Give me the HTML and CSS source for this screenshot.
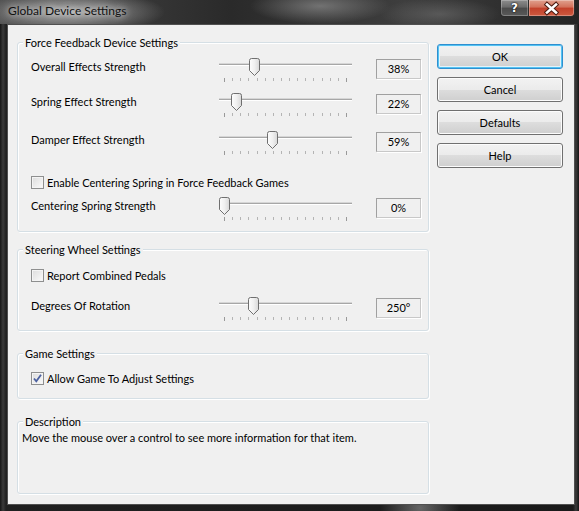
FILE: index.html
```html
<!DOCTYPE html>
<html lang="en">

<head>
  <title>Global Device Settings</title>
  <link rel="stylesheet" href="styles.css">
</head>

<body>
  <div class="window">
    <div class="titlebar">
      <span class="title">Global Device Settings</span>
      <div class="caption">
        <span class="cap cap-help">?</span>
        <span class="cap cap-close">
          <svg width="45" height="15" viewBox="0 0 45 15">
            <path d="M18 3.5 L27 11.5 M27 3.5 L18 11.5" stroke="#4a1a10" stroke-width="4.5" stroke-linecap="square" />
            <path d="M18 3.5 L27 11.5 M27 3.5 L18 11.5" stroke="#fff" stroke-width="2.6" stroke-linecap="square" />
          </svg>
        </span>
      </div>
    </div>

    <div class="client">
      <div class="groups">
        <fieldset class="group group-ff">
          <legend>Force Feedback Device Settings</legend>

          <div class="row row-1">
            <span class="label">Overall Effects Strength</span>
            <div class="slider">
              <div class="track"></div>
              <svg class="thumb" style="left: 30px" width="11" height="18" viewBox="0 0 11 18"><path d="M0.5 2.5 Q0.5 0.5 2.5 0.5 H8.5 Q10.5 0.5 10.5 2.5 V12.5 L5.5 17.5 L0.5 12.5 Z" fill="url(#thumbfill)" stroke="#6f6f6f" /></svg>
              <div class="ticks"><i class="end"></i><i></i><i></i><i></i><i></i><i></i><i></i><i></i><i></i><i></i><i></i><i></i><i></i><i></i><i></i><i class="end"></i></div>
            </div>
            <span class="value">38%</span>
          </div>

          <div class="row row-2">
            <span class="label">Spring Effect Strength</span>
            <div class="slider">
              <div class="track"></div>
              <svg class="thumb" style="left: 12px" width="11" height="18" viewBox="0 0 11 18"><path d="M0.5 2.5 Q0.5 0.5 2.5 0.5 H8.5 Q10.5 0.5 10.5 2.5 V12.5 L5.5 17.5 L0.5 12.5 Z" fill="url(#thumbfill)" stroke="#6f6f6f" /></svg>
              <div class="ticks"><i class="end"></i><i></i><i></i><i></i><i></i><i></i><i></i><i></i><i></i><i></i><i></i><i></i><i></i><i></i><i></i><i class="end"></i></div>
            </div>
            <span class="value">22%</span>
          </div>

          <div class="row row-3">
            <span class="label">Damper Effect Strength</span>
            <div class="slider">
              <div class="track"></div>
              <svg class="thumb" style="left: 48px" width="11" height="18" viewBox="0 0 11 18"><path d="M0.5 2.5 Q0.5 0.5 2.5 0.5 H8.5 Q10.5 0.5 10.5 2.5 V12.5 L5.5 17.5 L0.5 12.5 Z" fill="url(#thumbfill)" stroke="#6f6f6f" /></svg>
              <div class="ticks"><i class="end"></i><i></i><i></i><i></i><i></i><i></i><i></i><i></i><i></i><i></i><i></i><i></i><i></i><i></i><i></i><i class="end"></i></div>
            </div>
            <span class="value">59%</span>
          </div>

          <label class="check-row check-centering">
            <span class="checkbox"></span>
            <span>Enable Centering Spring in Force Feedback Games</span>
          </label>

          <div class="row row-4">
            <span class="label">Centering Spring Strength</span>
            <div class="slider">
              <div class="track"></div>
              <svg class="thumb" style="left: 0px" width="11" height="18" viewBox="0 0 11 18"><path d="M0.5 2.5 Q0.5 0.5 2.5 0.5 H8.5 Q10.5 0.5 10.5 2.5 V12.5 L5.5 17.5 L0.5 12.5 Z" fill="url(#thumbfill)" stroke="#6f6f6f" /></svg>
              <div class="ticks"><i class="end"></i><i></i><i></i><i></i><i></i><i></i><i></i><i></i><i></i><i></i><i></i><i></i><i></i><i></i><i></i><i class="end"></i></div>
            </div>
            <span class="value">0%</span>
          </div>
        </fieldset>

        <fieldset class="group group-wheel">
          <legend>Steering Wheel Settings</legend>

          <label class="check-row check-pedals">
            <span class="checkbox"></span>
            <span>Report Combined Pedals</span>
          </label>

          <div class="row row-5">
            <span class="label">Degrees Of Rotation</span>
            <div class="slider">
              <div class="track"></div>
              <svg class="thumb" style="left: 29px" width="11" height="18" viewBox="0 0 11 18"><path d="M0.5 2.5 Q0.5 0.5 2.5 0.5 H8.5 Q10.5 0.5 10.5 2.5 V12.5 L5.5 17.5 L0.5 12.5 Z" fill="url(#thumbfill)" stroke="#6f6f6f" /></svg>
              <div class="ticks"><i class="end"></i><i></i><i></i><i></i><i></i><i></i><i></i><i></i><i></i><i></i><i></i><i></i><i></i><i></i><i></i><i class="end"></i></div>
            </div>
            <span class="value">250°</span>
          </div>
        </fieldset>

        <fieldset class="group group-game">
          <legend>Game Settings</legend>

          <label class="check-row check-game">
            <span class="checkbox checked">
              <svg width="11" height="11" viewBox="0 0 11 11"><path d="M2 5.5 L4.3 8.3 L9 1.8" fill="none" stroke="#4c61a0" stroke-width="1.8" /></svg>
            </span>
            <span>Allow Game To Adjust Settings</span>
          </label>
        </fieldset>

        <fieldset class="group group-desc">
          <legend>Description</legend>
          <p class="desc">Move the mouse over a control to see more information for that item.</p>
        </fieldset>
      </div>

      <div class="buttons">
        <button class="btn btn-default">OK</button>
        <button class="btn">Cancel</button>
        <button class="btn">Defaults</button>
        <button class="btn">Help</button>
      </div>
    </div>
  </div>

  <svg width="0" height="0" class="defs">
    <defs>
      <linearGradient id="thumbfill" x1="0" y1="0" x2="1" y2="0">
        <stop offset="0" stop-color="#fdfdfd" />
        <stop offset="0.5" stop-color="#f0f0f0" />
        <stop offset="1" stop-color="#d8d8d8" />
      </linearGradient>
    </defs>
  </svg>
</body>

</html>
```

FILE: styles.css
```css
html,
body {
  margin: 0;
  padding: 0;
  overflow: hidden;
  background: #1e1e1e;
}

.defs {
  position: absolute;
}

.window {
  width: 579px;
  height: 511px;
  display: flex;
  flex-direction: column;
  font-family: Lato, "Noto Sans", sans-serif;
  font-size: 11px;
  color: #000;
  background:
    radial-gradient(ellipse 40px 30px at 420px 508px, rgba(150, 150, 150, .6), transparent),
    linear-gradient(to right, #151515, #3a3a3a 3px, #202020 6px, #1a1a1a 573px, #3a3a3a 576px, #151515);
}

/* title bar */

.titlebar {
  height: 24px;
  display: flex;
  justify-content: space-between;
  align-items: flex-start;
  padding-left: 8px;
  background:
    radial-gradient(ellipse 95px 22px at 70px 12px, rgba(190, 190, 190, .85), transparent),
    radial-gradient(ellipse 70px 18px at 320px 6px, rgba(140, 140, 140, .7), transparent),
    radial-gradient(ellipse 60px 16px at 440px 14px, rgba(120, 120, 120, .5), transparent),
    linear-gradient(to right, #4a4a4a, #2a2a2a 40%, #3e3e3e 70%, #242424);
}

.title {
  font-size: 12px;
  line-height: 22px;
  color: #111;
  text-shadow: 0 0 6px rgba(255, 255, 255, .7), 0 0 10px rgba(255, 255, 255, .5);
}

.caption {
  display: flex;
  margin-right: 4px;
}

.cap {
  height: 17px;
  box-sizing: border-box;
  border: 1px solid #2c2c2c;
  border-top: 0;
  display: flex;
  align-items: center;
  justify-content: center;
}

.cap-help {
  width: 28px;
  border-bottom-left-radius: 4px;
  border-right: 0;
  background: linear-gradient(#8d8d8d, #6a6a6a 45%, #4a4a4a 50%, #5a5a5a);
  box-shadow: inset 0 0 0 1px rgba(255, 255, 255, .25);
  color: #fff;
  font-family: "DejaVu Sans", sans-serif;
  font-weight: bold;
  font-size: 12px;
  text-shadow: 0 0 2px #000, 0 0 1px #000;
}

.cap-close {
  width: 47px;
  border-bottom-right-radius: 4px;
  background: linear-gradient(#e0a08e, #d2705a 45%, #c2402a 50%, #cd5a40);
  box-shadow: inset 0 0 0 1px rgba(255, 255, 255, .3);
}

/* client area */

.client {
  flex: 1;
  margin: 0 4px 6px 7px;
  border: 1px solid #505050;
  background: #f0f0f0;
  display: flex;
  align-items: flex-start;
}

.groups {
  margin-left: 9px;
  padding-top: 10px;
  width: 412px;
}

.group {
  margin: 0;
  padding: 0;
  border: 1px solid #d5dfe5;
  border-radius: 3px;
  box-shadow: inset 1px 1px 0 #fff, 1px 1px 0 #fff;
  min-width: 0;
}

.group legend {
  margin-left: 5px;
  padding: 0 2px;
  line-height: 15px;
  background: #f0f0f0;
}

.group-ff {
  padding-bottom: 13px;
}

.group-wheel {
  margin-top: 10px;
  padding-bottom: 12px;
}

.group-game {
  margin-top: 15px;
  padding-bottom: 12px;
}

.group-desc {
  margin-top: 15px;
  padding-bottom: 48px;
}

.desc {
  margin: 1px 0 0 4px;
  line-height: 15px;
}

/* rows with slider */

.row {
  display: flex;
  align-items: flex-start;
  height: 20px;
  margin-left: 13px;
}

.row-1 {
  margin-top: 9px;
}

.row-2 {
  margin-top: 15px;
}

.row-3 {
  margin-top: 18px;
}

.row-4 {
  margin-top: 8px;
}

.row-5 {
  margin-top: 15px;
}

.label {
  width: 188px;
  line-height: 15px;
}

.slider {
  position: relative;
  width: 133px;
  height: 26px;
  margin-top: -1px;
}

.track {
  position: absolute;
  left: 0;
  right: 0;
  top: 5px;
  height: 1px;
  background: #a7a7a7;
  border-bottom: 1px solid #fff;
  border-top: 1px solid #d6d6d6;
}

.thumb {
  position: absolute;
  top: 0;
}

.ticks {
  position: absolute;
  left: 5px;
  width: 123px;
  top: 20px;
  display: flex;
  justify-content: space-between;
}

.ticks i {
  width: 1px;
  height: 3px;
  background: #b4b4b4;
}

.ticks i.end {
  height: 4px;
  background: #999;
}

.value {
  margin-left: 24px;
  width: 45px;
  height: 20px;
  box-sizing: border-box;
  border: 1px solid #a0a0a0;
  border-right-color: #c8c8c8;
  border-bottom-color: #c8c8c8;
  box-shadow: 1px 1px 0 #fff;
  line-height: 18px;
  text-align: center;
}

/* checkboxes */

.check-row {
  display: flex;
  align-items: flex-start;
  height: 15px;
  margin-left: 13px;
}

.check-centering {
  margin-top: 23px;
}

.check-pedals {
  margin-top: 11px;
}

.check-game {
  margin-top: 10px;
}

.check-row span:last-child {
  margin-left: 3px;
  line-height: 15px;
}

.checkbox {
  width: 13px;
  height: 13px;
  margin-top: 1px;
  box-sizing: border-box;
  border: 1px solid #8e8f8f;
  background: linear-gradient(135deg, #dcdcdc, #fbfbfb);
  box-shadow: inset 0 0 0 1px #f4f4f4;
  display: flex;
  align-items: center;
  justify-content: center;
}

/* buttons */

.buttons {
  margin-left: 8px;
  margin-top: 19px;
  width: 126px;
  display: flex;
  flex-direction: column;
  gap: 8px;
}

.btn {
  height: 25px;
  margin: 0;
  padding: 0;
  font-family: Lato, "Noto Sans", sans-serif;
  font-size: 11px;
  color: #000;
  border: 1px solid #707070;
  border-radius: 3px;
  background: linear-gradient(#f2f2f2, #ebebeb 50%, #dddddd 50%, #cfcfcf);
  box-shadow: inset 0 0 0 1px #fcfcfc;
}

.btn-default {
  border-color: #2f8fd0;
  box-shadow: inset 0 0 0 1px #53c3f2, inset 0 0 0 2px #e4f3fb;
}
```
